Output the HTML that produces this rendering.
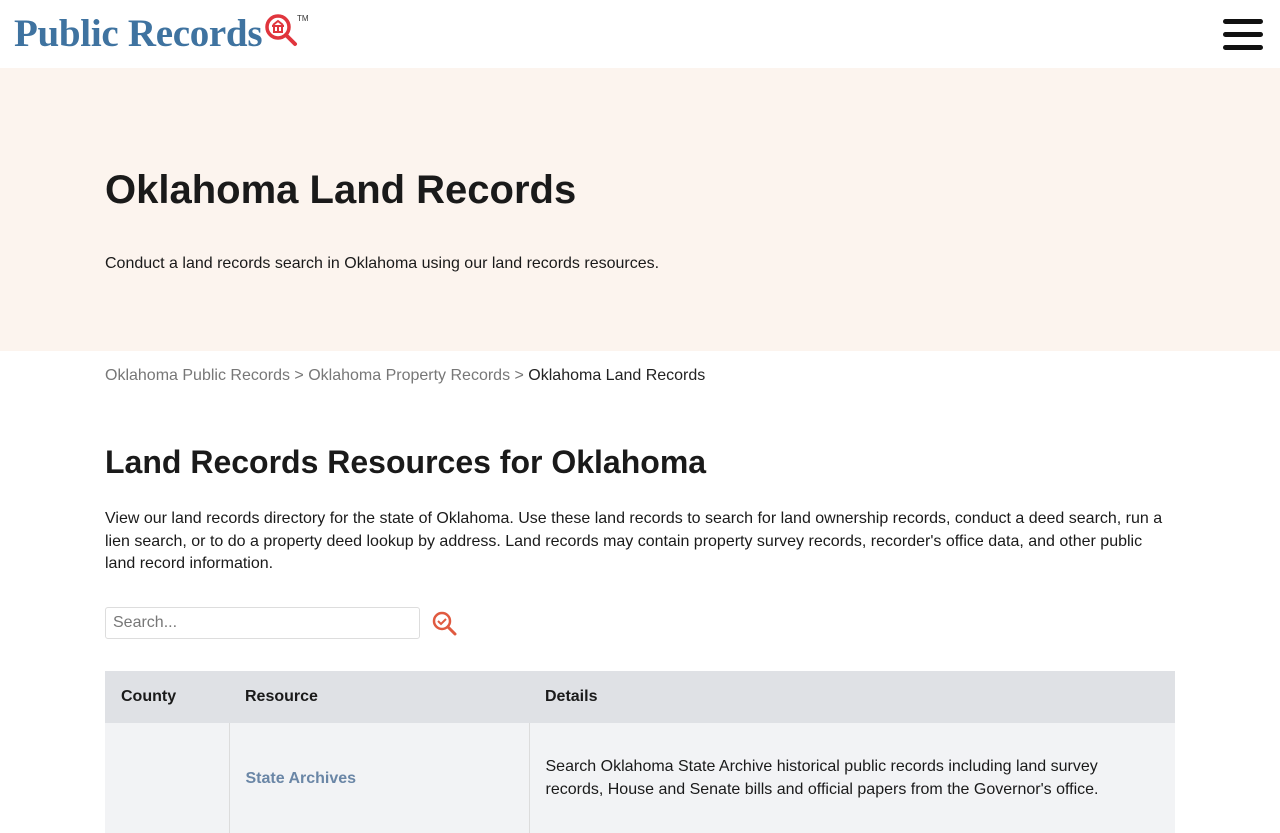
<!DOCTYPE html>
<html><head><meta charset="utf-8"><style>
body{margin:0;font-family:"Liberation Sans",sans-serif;color:#1a1a1a;background:#fff;width:1280px;height:800px;overflow:hidden}
.hdr{height:68px;position:relative}
.logo{position:absolute;left:14px;top:11px;font-family:"Liberation Serif",serif;font-weight:bold;font-size:39px;color:#3f73a0;letter-spacing:-0.3px}
.tm{position:absolute;left:297px;top:14px;font-size:8px;color:#333}
.burger{position:absolute;left:1223px;top:19px;width:40px}
.burger div{height:5px;background:#111;border-radius:3px;margin-bottom:8px}
.hero{background:#fcf4ee;height:283px;position:relative}
.hero h1{position:absolute;left:105px;top:100px;margin:0;font-size:40px;line-height:45px}
.hero p{position:absolute;left:105px;top:187px;margin:0;font-size:16px}
.bc{position:absolute;left:105px;top:367px;font-size:16px;color:#777}
.bc span{color:#222}
h2{position:absolute;left:105px;top:444px;margin:0;font-size:32px}
.intro{position:absolute;left:105px;top:508px;width:1070px;font-size:16px;line-height:22.5px;margin:0}
.search{position:absolute;left:105px;top:607px;width:315px;height:32px;border:1px solid #ddd;border-radius:3px;font-size:16px;color:#777;line-height:30px;padding-left:7px;box-sizing:border-box}
table{position:absolute;left:105px;top:671px;width:1070px;border-collapse:collapse;font-size:16px}
th{background:#dfe1e5;text-align:left;height:52px;padding:0 16px;font-weight:bold}
td{background:#f2f3f5;border-left:1px solid #dcdcdc;height:110px;vertical-align:middle;padding:0 16px;line-height:23px}
td:first-child{border-left:none}
a{color:#6a86a6;font-weight:bold;text-decoration:none}
</style></head><body>
<div class="hdr">
<div class="logo">Public Records</div>
<svg style="position:absolute;left:264px;top:13px" width="38" height="38" viewBox="0 0 38 38"><circle cx="14" cy="14" r="11" fill="none" stroke="#e0353d" stroke-width="3.5"/><path d="M8 13h12M9 19h10M10 13v6M14 13v6M18 13v6M9 12l5-4 5 4" stroke="#e0353d" stroke-width="2" fill="none"/><path d="M22 22l9 9" stroke="#e0353d" stroke-width="4" stroke-linecap="round"/></svg>
<div class="tm">TM</div>
<div class="burger"><div></div><div></div><div></div></div>
</div>
<div class="hero"><h1>Oklahoma Land Records</h1><p>Conduct a land records search in Oklahoma using our land records resources.</p></div>
<div class="bc">Oklahoma Public Records &gt; Oklahoma Property Records &gt; <span>Oklahoma Land Records</span></div>
<h2>Land Records Resources for Oklahoma</h2>
<p class="intro">View our land records directory for the state of Oklahoma. Use these land records to search for land ownership records, conduct a deed search, run a lien search, or to do a property deed lookup by address. Land records may contain property survey records, recorder's office data, and other public land record information.</p>
<div class="search">Search...</div>
<svg style="position:absolute;left:432px;top:611px" width="26" height="26" viewBox="0 0 26 26"><circle cx="10" cy="10" r="8" fill="none" stroke="#e05a40" stroke-width="2.5"/><path d="M6 10l3 3 5-5" stroke="#e05a40" stroke-width="2" fill="none"/><path d="M16 16l7 7" stroke="#e05a40" stroke-width="3" stroke-linecap="round"/></svg>
<table><tr><th style="width:92px">County</th><th style="width:268px">Resource</th><th>Details</th></tr>
<tr><td></td><td><a>State Archives</a></td><td>Search Oklahoma State Archive historical public records including land survey records, House and Senate bills and official papers from the Governor's office.</td></tr></table>
</body></html>
